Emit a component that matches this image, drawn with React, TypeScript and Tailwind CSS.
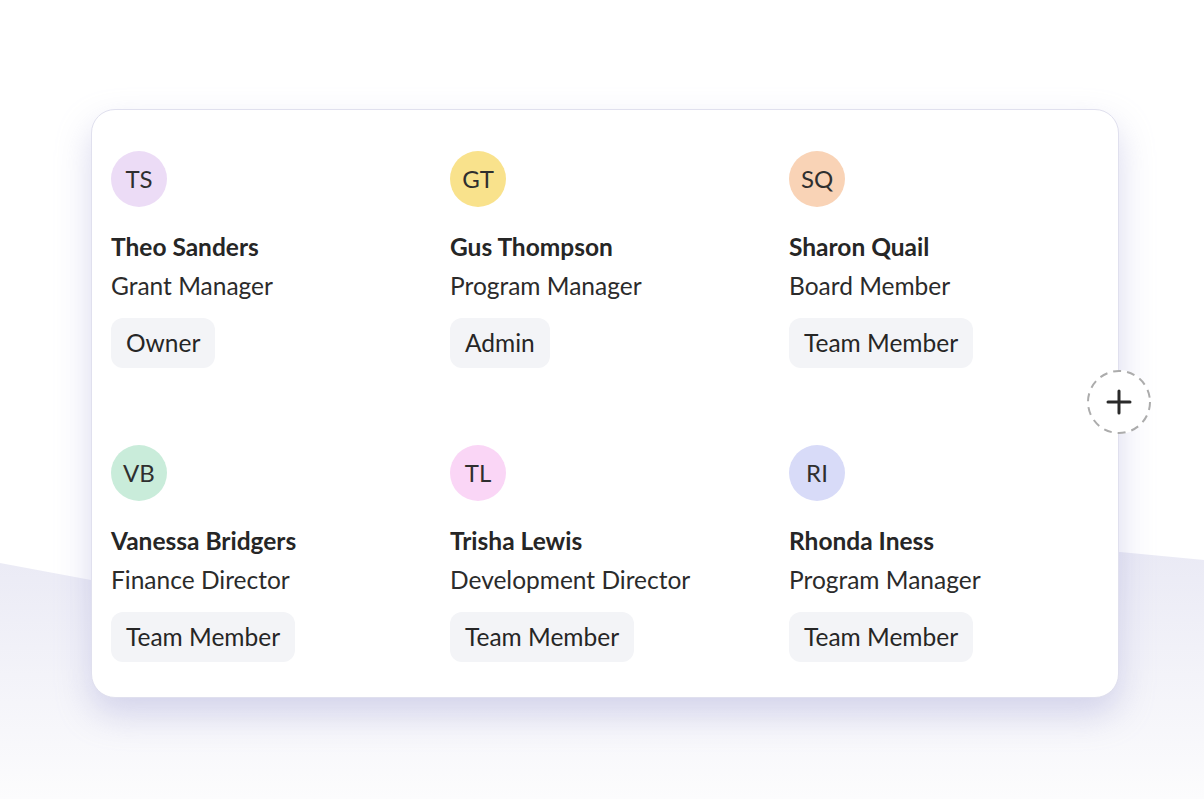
const people = [
  { initials: 'TS', name: 'Theo Sanders', role: 'Grant Manager', badge: 'Owner', color: 'bg-[#ecdcf6]' },
  { initials: 'GT', name: 'Gus Thompson', role: 'Program Manager', badge: 'Admin', color: 'bg-[#f9e28c]' },
  { initials: 'SQ', name: 'Sharon Quail', role: 'Board Member', badge: 'Team Member', color: 'bg-[#f9d3b6]' },
  { initials: 'VB', name: 'Vanessa Bridgers', role: 'Finance Director', badge: 'Team Member', color: 'bg-[#c9ecda]' },
  { initials: 'TL', name: 'Trisha Lewis', role: 'Development Director', badge: 'Team Member', color: 'bg-[#fad6f6]' },
  { initials: 'RI', name: 'Rhonda Iness', role: 'Program Manager', badge: 'Team Member', color: 'bg-[#d8dbf8]' },
];

function Person({ p }: { p: (typeof people)[number] }) {
  return (
    <div className="flex flex-col items-start">
      <div className={`w-14 h-14 rounded-full flex items-center justify-center text-[24px] text-[#2f2f2f] ${p.color}`}>
        {p.initials}
      </div>
      <div className="mt-[26px] text-[24.5px] leading-[28px] font-bold text-[#262626]">{p.name}</div>
      <div className="mt-[11px] text-[24.5px] leading-[28px] text-[#2b2b2b]">{p.role}</div>
      <div className="mt-[18px] h-[50px] px-[15px] flex items-center rounded-xl bg-[#f3f4f7] text-[24.5px] text-[#262626]">
        {p.badge}
      </div>
    </div>
  );
}

export default function App() {
  return (
    <div
      className="relative w-full h-[799px] overflow-hidden bg-white"
      style={{ fontFamily: 'Lato, "Noto Sans", sans-serif' }}
    >
      <svg className="absolute inset-0" width="1204" height="799" viewBox="0 0 1204 799">
        <defs>
          <linearGradient id="bgfill" x1="0" y1="0" x2="0" y2="1">
            <stop offset="0" stopColor="#eaeaf5" />
            <stop offset="1" stopColor="#fcfcfd" />
          </linearGradient>
        </defs>
        <path d="M0 563 L91 580 L1120 552 L1204 560 L1204 799 L0 799 Z" fill="url(#bgfill)" />
      </svg>

      <div className="relative pt-[109px] pl-[91px]">
        <div className="relative w-[1028px] rounded-[24px] bg-white border border-[#e0e0ee] shadow-[0_16px_34px_rgba(165,165,215,0.42)] pt-[41px] pb-[35px] pl-[19px]">
          <div className="grid grid-cols-[339px_339px_1fr] gap-y-[77px]">
            {people.map((p) => (
              <Person key={p.initials} p={p} />
            ))}
          </div>

          <button className="absolute right-[-33px] top-[260px] w-16 h-16 rounded-full bg-white flex items-center justify-center">
            <svg className="absolute inset-0" width="64" height="64" viewBox="0 0 64 64">
              <circle cx="32" cy="32" r="31" fill="none" stroke="#acacac" strokeWidth="2" strokeDasharray="8 6" />
            </svg>
            <svg width="26" height="26" viewBox="0 0 26 26">
              <path d="M13 2 V24 M2 13 H24" stroke="#2a2a2a" strokeWidth="3" strokeLinecap="round" />
            </svg>
          </button>
        </div>
      </div>
    </div>
  );
}
